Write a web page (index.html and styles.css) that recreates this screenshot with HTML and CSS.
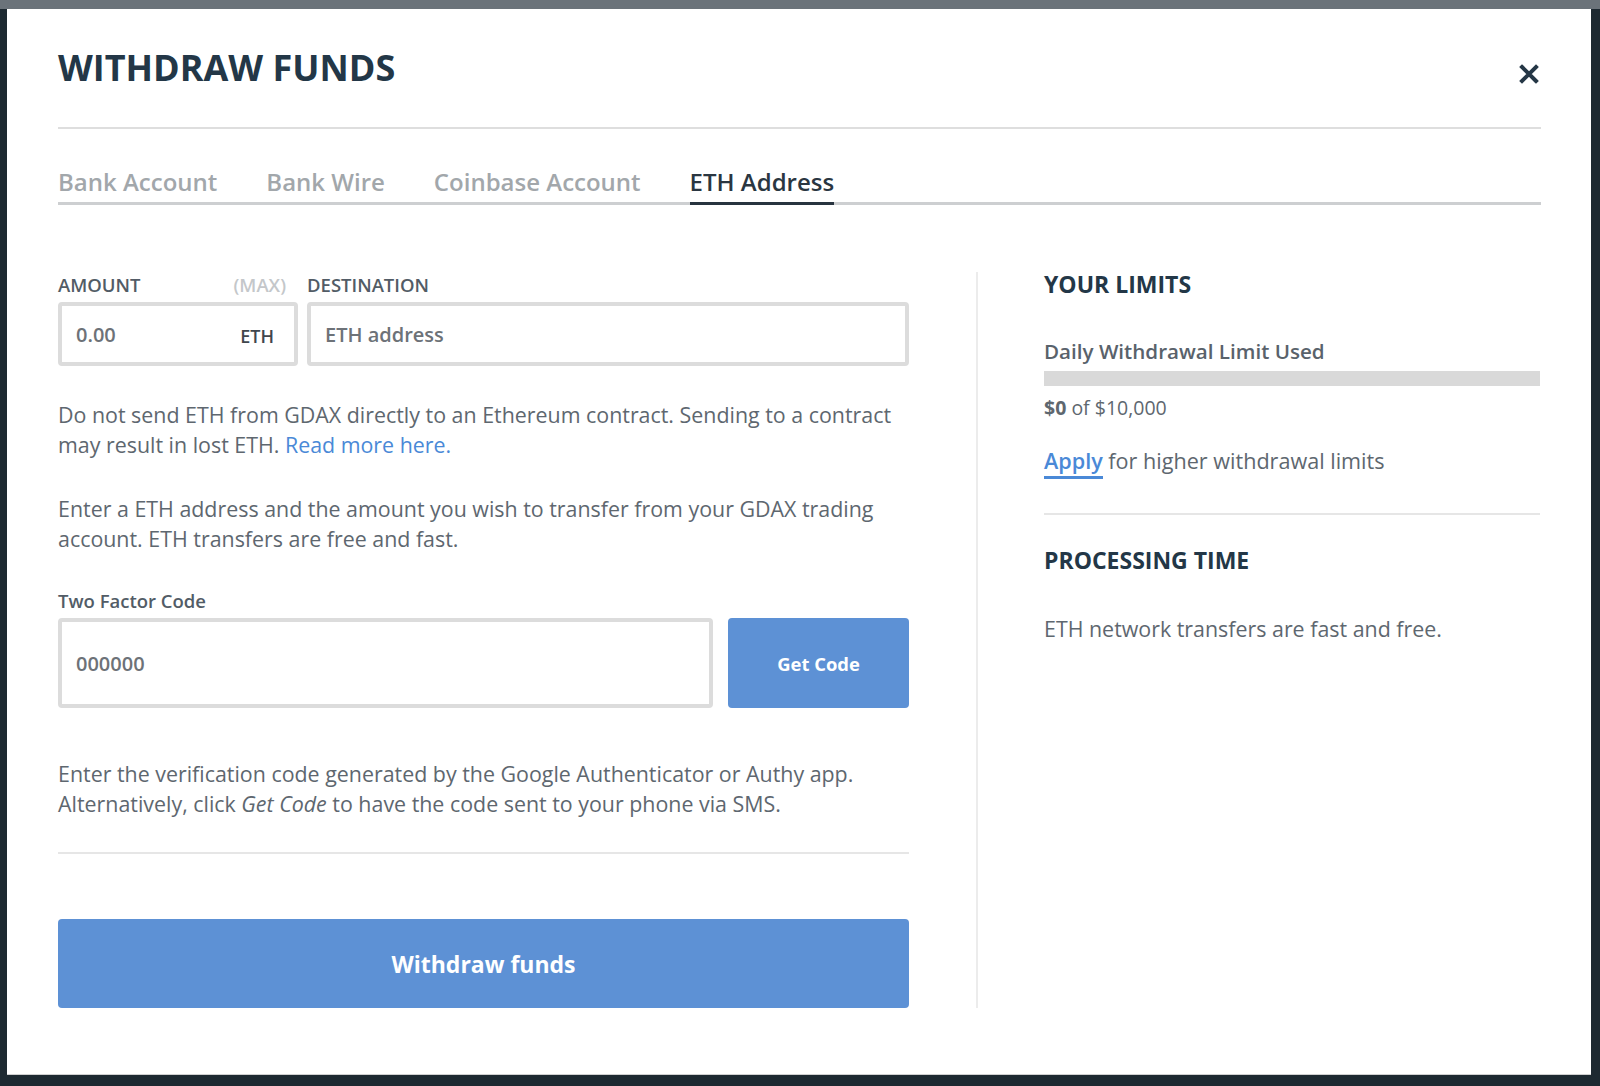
FILE: index.html
```html
<!DOCTYPE html>
<html lang="en">
<head>
<meta charset="utf-8">
<title>Withdraw Funds</title>
<link rel="stylesheet" href="styles.css">
</head>
<body>
<div class="backdrop">
  <div class="modal">
    <div class="modal-header">
      <h1 class="modal-title">WITHDRAW FUNDS</h1>
      <button class="close" aria-label="Close">
        <svg width="20" height="20" viewBox="0 0 20 20"><path d="M3 3 L17 17 M17 3 L3 17" stroke="#253746" stroke-width="4" stroke-linecap="square"/></svg>
      </button>
    </div>

    <nav class="tabs">
      <span class="tab">Bank Account</span>
      <span class="tab">Bank Wire</span>
      <span class="tab">Coinbase Account</span>
      <span class="tab active">ETH Address</span>
    </nav>

    <div class="modal-body">
      <div class="left">
        <div class="field-row">
          <div class="field amount">
            <div class="label-row"><span class="label">AMOUNT</span><span class="max">(MAX)</span></div>
            <div class="input amount-input"><span class="value">0.00</span><span class="unit">ETH</span></div>
          </div>
          <div class="field dest">
            <div class="label-row"><span class="label">DESTINATION</span></div>
            <div class="input"><span class="value">ETH address</span></div>
          </div>
        </div>

        <p class="text">Do not send ETH from GDAX directly to an Ethereum contract. Sending to a contract may result in lost ETH. <a class="link">Read more here.</a></p>
        <p class="text">Enter a ETH address and the amount you wish to transfer from your GDAX trading account. ETH transfers are free and fast.</p>

        <div class="label-row tf-label"><span class="label-cap">Two Factor Code</span></div>
        <div class="tf-row">
          <div class="input tf-input"><span class="value">000000</span></div>
          <button class="btn get-code">Get Code</button>
        </div>

        <p class="text verify">Enter the verification code generated by the Google Authenticator or Authy app. Alternatively, click <em>Get Code</em> to have the code sent to your phone via SMS.</p>

        <hr class="rule">

        <button class="btn withdraw">Withdraw funds</button>
      </div>

      <div class="divider"></div>

      <div class="right">
        <h3 class="section-title">YOUR LIMITS</h3>
        <div class="limit-label">Daily Withdrawal Limit Used</div>
        <div class="bar"><div class="bar-fill" style="width:0%"></div></div>
        <div class="limit-amount"><strong>$0</strong> of $10,000</div>
        <div class="apply"><a class="apply-link">Apply</a> for higher withdrawal limits</div>
        <hr class="rule right-rule">
        <h3 class="section-title">PROCESSING TIME</h3>
        <p class="proc">ETH network transfers are fast and free.</p>
      </div>
    </div>
  </div>
</div>
</body>
</html>
```

FILE: styles.css
```css
* { box-sizing: border-box; }

html, body {
  margin: 0;
  padding: 0;
  height: 100%;
}

body {
  background: #1d2931;
  font-family: "Open Sans", "Liberation Sans", sans-serif;
  color: #5e676f;
  overflow: hidden;
}

.backdrop {
  border-top: 9px solid #6b737a;
  padding-left: 7px;
  height: 1086px;
}

.modal {
  width: 1584px;
  height: 1066px;
  background: #ffffff;
  border-bottom: 1px solid #d0d0d0;
  padding: 40px 50px 0 51px;
}

.modal-header {
  display: flex;
  justify-content: space-between;
  align-items: flex-start;
  border-bottom: 2px solid #dedede;
  padding-bottom: 41px;
}

.modal-title {
  margin: 0;
  font-size: 36px;
  line-height: 37px;
  font-weight: 700;
  color: #233747;
}

.close {
  border: 0;
  background: none;
  padding: 0;
  margin: 15px 2px 0 0;
  width: 20px;
  height: 20px;
  display: block;
}
.close svg { display: block; }

.tabs {
  display: flex;
  gap: 49px;
  margin-top: 41px;
  border-bottom: 3px solid #cdcfd1;
}

.tab {
  font-size: 24px;
  line-height: 24px;
  font-weight: 600;
  color: #a2a7ab;
  padding-bottom: 8px;
  border-bottom: 3px solid transparent;
  margin-bottom: -3px;
}

.tab.active {
  color: #2a3641;
  border-bottom-color: #28343f;
}

.modal-body {
  display: flex;
  margin-top: 67px;
}

.left {
  width: 851px;
  flex: none;
}

.divider {
  width: 2px;
  background: #ececec;
  margin: 0 66px 0 67px;
  height: 736px;
  flex: none;
}

.right {
  width: 496px;
  flex: none;
}

.field-row {
  display: flex;
  gap: 9px;
}

.field.amount { width: 240px; }
.field.dest { flex: 1; }

.label-row {
  display: flex;
  justify-content: space-between;
  height: 27px;
  line-height: 26px;
  margin-bottom: 3px;
}

.label {
  font-size: 18.5px;
  font-weight: 600;
  color: #525c66;
}

.max {
  font-size: 18.5px;
  font-weight: 600;
  color: #c4c7ca;
  padding-right: 12px;
}

.input {
  height: 64px;
  border: 4px solid #dcdcdc;
  border-radius: 4px;
  display: flex;
  align-items: center;
  justify-content: space-between;
  padding: 0 20px 0 14px;
}

.value {
  font-size: 20px;
  font-weight: 600;
  color: #6d7278;
}

.unit {
  font-size: 18px;
  font-weight: 600;
  color: #3f464d;
  margin-top: 3px;
}

.text {
  margin: 34px 0 0 0;
  font-size: 21.4px;
  line-height: 30px;
  color: #5e676f;
}

.text em { font-style: italic; }

.link { color: #4a89d7; text-decoration: none; }

.tf-label { margin-top: 34px; }

.label-cap {
  font-size: 18.5px;
  font-weight: 600;
  color: #525c66;
}

.tf-row {
  display: flex;
  gap: 15px;
}

.tf-input {
  width: 655px;
  height: 90px;
  padding-left: 14px;
}

.btn {
  border: 0;
  border-radius: 4px;
  background: #5d91d5;
  color: #ffffff;
  font-family: "Open Sans", "Liberation Sans", sans-serif;
  font-weight: 700;
}

.get-code {
  width: 181px;
  height: 90px;
  font-size: 18.4px;
}

.verify { margin-top: 51px; }

.rule {
  border: 0;
  height: 2px;
  background: #e6e6e6;
  margin: 33px 0 0 0;
}

.withdraw {
  display: block;
  width: 100%;
  height: 89px;
  margin-top: 65px;
  font-size: 23px;
}

.section-title {
  margin: 0;
  font-size: 23px;
  line-height: 24px;
  font-weight: 700;
  color: #233747;
}

.limit-label {
  margin-top: 42px;
  font-size: 20.6px;
  line-height: 26px;
  font-weight: 600;
  color: #59626b;
}

.bar {
  margin-top: 7px;
  height: 15px;
  background: #d9d9d9;
}
.bar-fill { height: 100%; background: #5d91d5; }

.limit-amount {
  margin-top: 9px;
  font-size: 19.5px;
  line-height: 26px;
  color: #5e676f;
}
.limit-amount strong { font-weight: 700; }

.apply {
  margin-top: 25px;
  font-size: 21.6px;
  line-height: 30px;
  color: #5e676f;
}

.apply-link {
  color: #4a89d7;
  font-weight: 600;
  text-decoration: none;
  border-bottom: 3px solid #4a89d7;
  padding-bottom: 1px;
}

.right-rule { margin-top: 37px; }

.right-rule + .section-title { margin-top: 33px; }

.proc {
  margin: 42px 0 0 0;
  font-size: 21.4px;
  line-height: 30px;
  color: #5e676f;
}
```
